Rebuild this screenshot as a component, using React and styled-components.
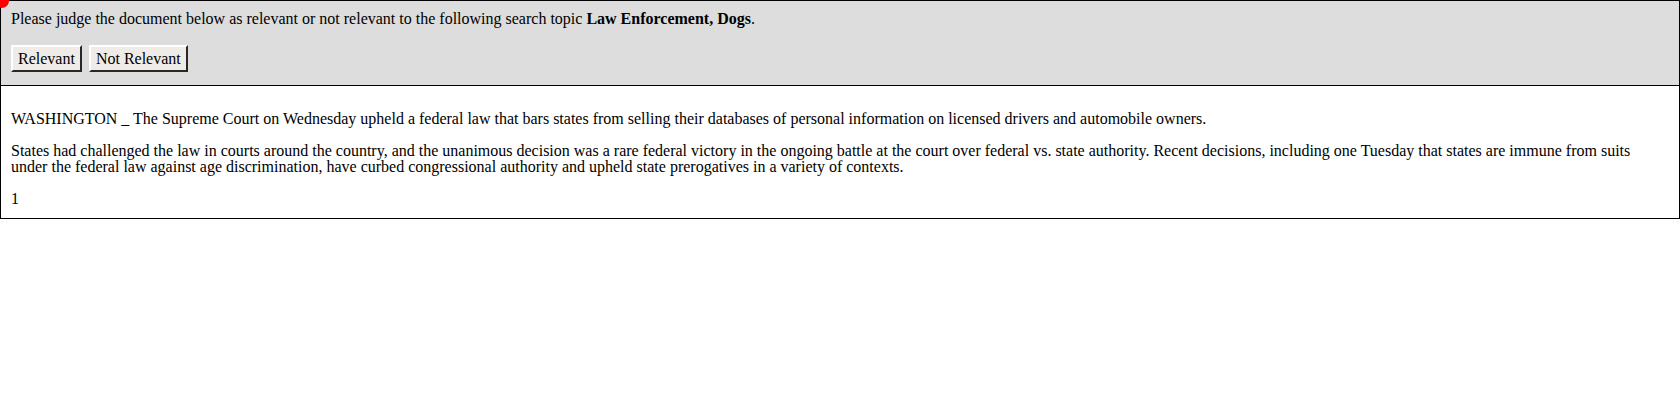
import React from "react"
import styled, { createGlobalStyle } from 'styled-components'

const GlobalStyle = createGlobalStyle`
  body {
    margin: 0;
    background: #fff;
    color: #000;
    font-family: "Liberation Serif", "Times New Roman", serif;
    font-size: 16px;
  }
`

const Frame = styled.div`
  position: relative;
  border: 1px solid #000;
`

// little red dot sitting on the top-left corner
const Marker = styled.span`
  position: absolute;
  top: -7px;
  left: -7px;
  width: 15px;
  height: 14px;
  border-radius: 50%;
  background: #f00;
`

const Prompt = styled.div`
  background: #dddddd;
  padding: 9px 10px 13px;
  border-bottom: 1px solid #000;
`

const Question = styled.div`
  line-height: 17px;
  margin-bottom: 18px;
`

const Buttons = styled.div`
  display: flex;
  gap: 7px;
`

const JudgeButton = styled.button`
  font-family: "Liberation Serif", "Times New Roman", serif;
  font-size: 16px;
  color: #000;
  height: 27px;
  padding: 0 5px;
  background: #efece8;
  border: 2px outset #d6d3ce;
  border-top-color: #fff;
  border-left-color: #fff;
  border-right-color: #7b7b7b;
  border-bottom-color: #7b7b7b;
  cursor: pointer;
`

const Doc = styled.div`
  padding: 9px 10px 11px;
`

const Para = styled.p`
  margin: 16px 0;
  line-height: 16px;
  &:last-child { margin-bottom: 0; }
`

const App = () => {
  return (
    <>
      <GlobalStyle />
      <Frame>
        <Marker />
        <Prompt>
          <Question>
            Please judge the document below as relevant or not relevant to the following search topic <b>Law Enforcement, Dogs</b>.
          </Question>
          <Buttons>
            <JudgeButton>Relevant</JudgeButton>
            <JudgeButton>Not Relevant</JudgeButton>
          </Buttons>
        </Prompt>
        <Doc>
          <Para>
            WASHINGTON _ The Supreme Court on Wednesday upheld a federal law that bars states from selling their databases of personal information on licensed drivers and automobile owners.
          </Para>
          <Para>
            States had challenged the law in courts around the country, and the unanimous decision was a rare federal victory in the ongoing battle at the court over federal vs. state authority. Recent decisions, including one Tuesday that states are immune from suits under the federal law against age discrimination, have curbed congressional authority and upheld state prerogatives in a variety of contexts.
          </Para>
          <Para>1</Para>
        </Doc>
      </Frame>
    </>
  )
}

export default App
